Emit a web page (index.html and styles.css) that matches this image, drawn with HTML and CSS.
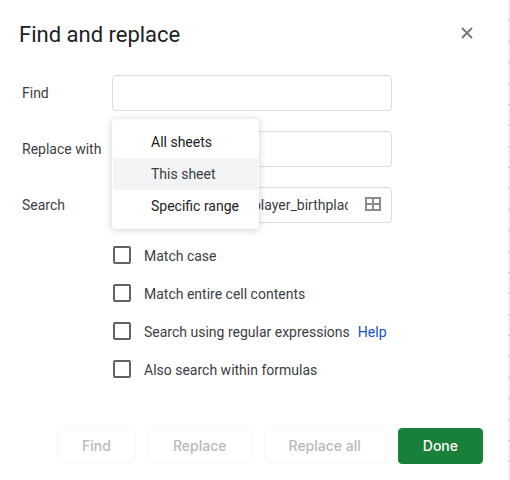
FILE: index.html
```html
<!DOCTYPE html>
<html lang="en">
<head>
<meta charset="utf-8">
<title>Find and replace</title>
<link rel="stylesheet" href="styles.css">
</head>
<body>
<main class="dialog">
  <header class="dialog-header">
    <h1 class="dialog-title">Find and replace</h1>
    <button class="close-button" type="button" aria-label="Close">
      <svg width="12" height="12" viewBox="0 0 12 12" aria-hidden="true"><path d="M1 1l10 10M11 1L1 11" fill="none" stroke="#747678" stroke-width="1.8"/></svg>
    </button>
  </header>
  <form class="dialog-form">
    <div class="field-row">
      <label class="field-label" for="find">Find</label>
      <div class="field-control"><input class="text-box" id="find" type="text"></div>
    </div>
    <div class="field-row">
      <label class="field-label" for="replace">Replace with</label>
      <div class="field-control"><input class="text-box" id="replace" type="text"></div>
    </div>
    <div class="field-row">
      <label class="field-label" for="scope">Search</label>
      <div class="field-control">
        <select class="scope-select" id="scope"><option>This sheet</option></select>
        <div class="range-box">
          <input class="range-input" type="text" aria-label="Range" value="player_birthplace">
          <button class="range-button" type="button" aria-label="Select data range">
            <svg width="16" height="14" viewBox="0 0 16 14" aria-hidden="true"><path d="M1 1h14v12H1zM8 1v12M1 7h14" fill="none" stroke="#8a8c8f" stroke-width="2"/></svg>
          </button>
        </div>
        <div class="scope-menu" role="listbox" aria-label="Search scope">
          <button class="menu-item" type="button" role="option">All sheets</button>
          <button class="menu-item menu-item-active" type="button" role="option" aria-selected="true">This sheet</button>
          <button class="menu-item" type="button" role="option">Specific range</button>
        </div>
      </div>
    </div>
    <div class="options">
      <div class="option-row"><input class="tick" type="checkbox" id="case"><label for="case">Match case</label></div>
      <div class="option-row"><input class="tick" type="checkbox" id="entire"><label for="entire">Match entire cell contents</label></div>
      <div class="option-row"><input class="tick" type="checkbox" id="regex"><label for="regex">Search using regular expressions</label><a class="help-link" href="#">Help</a></div>
      <div class="option-row"><input class="tick" type="checkbox" id="formulas"><label for="formulas">Also search within formulas</label></div>
    </div>
    <footer class="actions">
      <button class="action" type="button" disabled>Find</button>
      <button class="action" type="button" disabled>Replace</button>
      <button class="action" type="button" disabled>Replace all</button>
      <button class="action action-primary" type="button">Done</button>
    </footer>
  </form>
</main>
<div class="sheet-edge"></div>
</body>
</html>
```
FILE: styles.css
```css
* {
  box-sizing: border-box;
}

body {
  margin: 0;
  display: flex;
  min-height: 100vh;
  background: #fff;
  color: #3c4043;
  font: 14px/20px Roboto, sans-serif;
}

button,
input,
select {
  font: inherit;
  color: inherit;
}

button {
  padding: 0;
  border: 0;
  background: none;
}

.dialog {
  flex: 1;
  min-width: 0;
  padding: 20px 25px 16px 22px;
}

/* Row lines of the sheet behind the dialog */
.sheet-edge {
  width: 2px;
  background: repeating-linear-gradient(#efefef 0 20px, #cfcfcf 20px 21px);
}

.dialog-header {
  display: flex;
  justify-content: space-between;
  align-items: flex-start;
  height: 28px;
  margin-left: -3px;
}

.dialog-title {
  margin: 0;
  color: #202124;
  font-size: 22px;
  font-weight: 400;
  line-height: 30px;
}

.close-button {
  display: grid;
  place-items: center;
  width: 32px;
  height: 26px;
}

.dialog-form {
  padding-top: 27px;
}

.field-row {
  display: grid;
  grid-template-columns: 90px 1fr;
  align-items: center;
  margin-bottom: 20px;
}

.field-control {
  position: relative;
  display: flex;
  gap: 12px;
  width: 100%;
  max-width: 280px;
}

.text-box,
.scope-select,
.range-box {
  height: 36px;
  border: 1px solid #dadce0;
  border-radius: 4px;
  background: #fff;
}

.text-box {
  width: 100%;
  padding: 0 12px;
}

.scope-select {
  width: 120px;
  padding: 0 8px;
}

.range-box {
  flex: 1;
  min-width: 0;
  display: flex;
  align-items: center;
  justify-content: space-between;
  padding: 0 10px 0 8px;
}

.range-input {
  flex: 1;
  min-width: 0;
  margin-right: 17px;
  padding: 0;
  border: 0;
  background: none;
}

.range-button {
  display: grid;
  padding-bottom: 2px;
}

.scope-menu {
  position: absolute;
  z-index: 1;
  bottom: -6px;
  left: 0;
  width: 147px;
  padding: 7px 1px;
  border-radius: 4px;
  background: #fff;
  box-shadow: 0 1px 6px 1px rgba(60, 64, 67, 0.2);
}

.menu-item {
  display: block;
  width: 100%;
  height: 32px;
  padding-left: 38px;
  color: #202124;
  text-align: left;
}

.menu-item-active {
  background: #f1f3f4;
  color: #3c4043;
}

.options {
  margin-left: 91px;
  padding-top: 3px;
}

.option-row {
  display: flex;
  align-items: flex-start;
  height: 20px;
  margin-bottom: 18px;
}

.tick {
  appearance: none;
  width: 18px;
  height: 18px;
  margin: 0 13px 0 0;
  border: 2px solid #5f6368;
  border-radius: 2px;
}

.help-link {
  margin-left: 8px;
  color: #1155cc;
  text-decoration: none;
}

.actions {
  display: flex;
  justify-content: flex-end;
  gap: 12px;
  padding-top: 30px;
}

.action {
  height: 36px;
  padding: 0 24px;
  border: 1px solid #f8f8f9;
  border-radius: 4px;
  color: #b9babb;
  font-family: Inter, Roboto, sans-serif;
  font-weight: 500;
}

.action-primary {
  border-color: #188038;
  background: #188038;
  color: #fff;
}
```
